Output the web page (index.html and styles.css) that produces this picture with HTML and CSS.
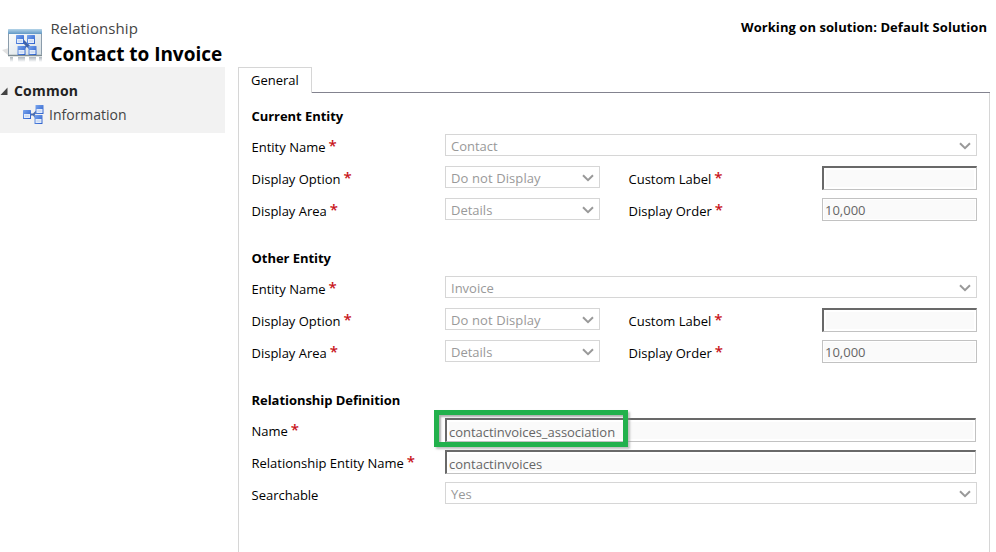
FILE: index.html
```html
<!DOCTYPE html>
<html lang="en">
<head>
<meta charset="utf-8">
<title>Relationship: Contact to Invoice</title>
<link rel="stylesheet" href="styles.css">
</head>
<body>
<svg class="defs" width="0" height="0" aria-hidden="true">
  <defs>
    <linearGradient id="blue" x1="0" y1="0" x2="1" y2="1"><stop offset="0" stop-color="#79a5ee"/><stop offset="1" stop-color="#295dc9"/></linearGradient>
    <linearGradient id="bar" x1="0" y1="0" x2="0" y2="1"><stop offset="0" stop-color="#b4d4e8"/><stop offset="1" stop-color="#6198c5"/></linearGradient>
    <linearGradient id="pane" x1="0" y1="0" x2="1" y2="1"><stop offset="0" stop-color="#ffffff"/><stop offset="1" stop-color="#d3dde2"/></linearGradient>
    <linearGradient id="fade" x1="0" y1="0" x2="0" y2="1"><stop offset="0" stop-color="#8b97a3" stop-opacity=".7"/><stop offset="1" stop-color="#8b97a3" stop-opacity="0"/></linearGradient>
    <g id="node"><rect width="8" height="9" rx=".5" fill="url(#blue)"/><rect x="1" y="4" width="6" height="4" fill="#e2ecfc"/><path d="M2 6h4" stroke="#b5c8e6" stroke-width=".8"/></g>
    <symbol id="chevron" viewBox="0 0 12 8"><path d="M1 1.300 6 6.200 11 1.300" fill="none" stroke="#999" stroke-width="2"/></symbol>
  </defs>
</svg>
<header class="header">
  <svg class="entity-icon" width="42" height="36" viewBox="0 0 42 36">
    <path d="M-1 22 6 20v8z" fill="#aaa" opacity=".35"/>
    <rect x="5.500" y="1.500" width="33" height="26" rx="1" fill="url(#pane)" stroke="#8b9cab"/>
    <rect x="5" y="1" width="34" height="5" rx="1" fill="url(#bar)"/>
    <path d="M5 27.500h34" stroke="#7d8b91" stroke-width="1.500"/>
    <path d="m20 13 7 7" stroke="#3e62aa" stroke-width="3"/><path d="M25 16l-5 6" stroke="#3e62aa" stroke-width="1.500"/>
    <use href="#node" x="13" y="7"/><use href="#node" x="24" y="7"/>
    <use href="#node" x="14.500" y="18"/><use href="#node" x="25.500" y="18"/>
    <path d="M7 29h3v5H7zM15 29h7v5h-7zM26 29h7v5h-7zM36 29h3v5h-3z" fill="url(#fade)"/>
  </svg>
  <div class="titles">
    <div class="kind">Relationship</div>
    <h1 class="name">Contact to Invoice</h1>
  </div>
  <div class="solution">Working on solution: Default Solution</div>
</header>
<div class="body">
  <nav class="nav">
    <div class="nav-group"><svg width="9" height="9" viewBox="0 0 9 9"><path d="M7.500 .5v7.500H.5z" fill="#444"/></svg><span class="nav-title">Common</span></div>
    <a class="nav-item"><svg width="21" height="20" viewBox="0 0 21 20">
      <path d="M7 9.500h4M10 10l4-4M10 9l4 5" stroke="#4a6cad" stroke-width="2" fill="none"/>
      <use href="#node" x="0" y="5"/><use href="#node" x="12.500" y="0"/><use href="#node" x="11.500" y="10"/>
    </svg><span class="nav-text">Information</span></a>
  </nav>
  <main class="main">
    <div class="tabs"><div class="tab"><span>General</span></div><div class="tab-line"></div></div>
    <div class="panel">
      <section class="section">
        <h2 class="heading">Current Entity</h2>
        <div class="row"><label class="label"><span>Entity Name</span><b>*</b></label><div class="select wide"><span>Contact</span><svg><use href="#chevron"/></svg></div></div>
        <div class="row"><label class="label"><span>Display Option</span><b>*</b></label><div class="select"><span class="loose">Do not Display</span><svg><use href="#chevron"/></svg></div><label class="label second"><span>Custom Label</span><b>*</b></label><div class="input sunken"></div></div>
        <div class="row"><label class="label"><span>Display Area</span><b>*</b></label><div class="select"><span>Details</span><svg><use href="#chevron"/></svg></div><label class="label second"><span>Display Order</span><b>*</b></label><div class="input"><span>10,000</span></div></div>
      </section>
      <section class="section">
        <h2 class="heading">Other Entity</h2>
        <div class="row"><label class="label"><span>Entity Name</span><b>*</b></label><div class="select wide"><span>Invoice</span><svg><use href="#chevron"/></svg></div></div>
        <div class="row"><label class="label"><span>Display Option</span><b>*</b></label><div class="select"><span class="loose">Do not Display</span><svg><use href="#chevron"/></svg></div><label class="label second"><span>Custom Label</span><b>*</b></label><div class="input sunken"></div></div>
        <div class="row"><label class="label"><span>Display Area</span><b>*</b></label><div class="select"><span>Details</span><svg><use href="#chevron"/></svg></div><label class="label second"><span>Display Order</span><b>*</b></label><div class="input"><span>10,000</span></div></div>
      </section>
      <section class="section">
        <h2 class="heading">Relationship Definition</h2>
        <div class="row"><label class="label"><span>Name</span><b>*</b></label><div class="input sunken wide"><span class="tight">contactinvoices_association</span><i class="highlight"></i></div></div>
        <div class="row"><label class="label"><span>Relationship Entity Name</span><b>*</b></label><div class="input sunken wide"><span>contactinvoices</span></div></div>
        <div class="row"><label class="label"><span>Searchable</span></label><div class="select wide"><span>Yes</span><svg><use href="#chevron"/></svg></div></div>
      </section>
    </div>
  </main>
</div>
</body>
</html>
```
FILE: styles.css
```css
* { box-sizing: border-box; }
body { margin: 0; width: 996px; height: 552px; overflow: hidden; background: #fff; color: #000; font: 13px/18px "Open Sans", "Noto Sans", sans-serif; display: flex; flex-direction: column; }
.defs { position: absolute; }
span, h1, h2, .kind, .solution { white-space: nowrap; }
.header { height: 67px; flex: none; display: flex; align-items: flex-start; }
.entity-icon { margin: 28px 0 0 3px; flex: none; overflow: visible; }
.titles { margin: 17px 0 0 5.5px; }
.kind { font-size: 15px; line-height: 22px; color: #444; letter-spacing: 0.08px; }
.name { margin: 2px 0 0; font-size: 19px; line-height: 26px; font-weight: 700; letter-spacing: -0.03px; }
.solution { margin: 18px 9px 0 auto; font-weight: 700; letter-spacing: 0.06px; }
.body { flex: 1; display: flex; align-items: stretch; min-height: 0; }
.nav { width: 225px; height: 66px; background: #f2f2f2; padding-top: 12px; flex: none; }
.nav-group { display: flex; align-items: center; height: 24px; font-size: 14px; font-weight: 700; letter-spacing: 0.2px; color: #222; gap: 5px; }
.nav-item { display: flex; align-items: center; height: 24px; margin-left: 23px; gap: 5px; font-size: 14px; color: #444; }
.main { width: 752px; margin-left: 13px; display: flex; flex-direction: column; }
.tabs { display: flex; height: 26px; flex: none; }
.tab { width: 74px; border: 1px solid #d6d6d6; border-bottom: 0; padding: 3px 0 0 12px; }
.tab-line { flex: 1; border-bottom: 1px solid #83838f; }
.panel { flex: 1; border: solid #d6d6d6; border-width: 0 1px; padding: 9px 0 0 12.5px; }
.section { margin-bottom: 18px; }
.heading { margin: 0; height: 28px; font-size: 13px; line-height: 28px; font-weight: 700; letter-spacing: -0.05px; }
.row { height: 32px; padding-top: 4px; display: flex; align-items: flex-start; }
.label { width: 193.5px; flex: none; display: flex; padding-top: 4px; }
.label b { font: 600 15px/18px "Open Sans", sans-serif; color: #c8141a; margin: -2px 0 0 3px; height: 18px; }
.label.second { width: 193.5px; margin-left: 28.5px; }
.select { width: 155px; height: 22px; border: 1px solid #d6d6d6; color: #999; display: flex; align-items: center; justify-content: space-between; padding: 2px 5px 0 5px; }
.select svg { width: 12px; height: 8px; margin-top: -1px; }
.loose { letter-spacing: 0.1px; }
.tight { letter-spacing: -0.03px; }
.input { position: relative; width: 155px; height: 23px; border: 1px solid #c2c2c2; background: #fafafa; box-shadow: inset 0 0 0 1px #fff; color: #666; padding: 2px 0 0 2px; }
.input.sunken { height: 24px; border-color: #696969 #c2c2c2 #c2c2c2 #696969; border-width: 2px 1px 1px 2px; box-shadow: inset 0 0 0 2px #fff; }
.select.wide { width: 532px; }
.input.wide { width: 531px; padding-top: 3px; }
.highlight { position: absolute; left: -13px; top: -10px; width: 194px; height: 37px; border: 5px solid #22b14c; box-shadow: 2px 2px 2px #8888, inset 2px 2px 2px #888a; }
```
